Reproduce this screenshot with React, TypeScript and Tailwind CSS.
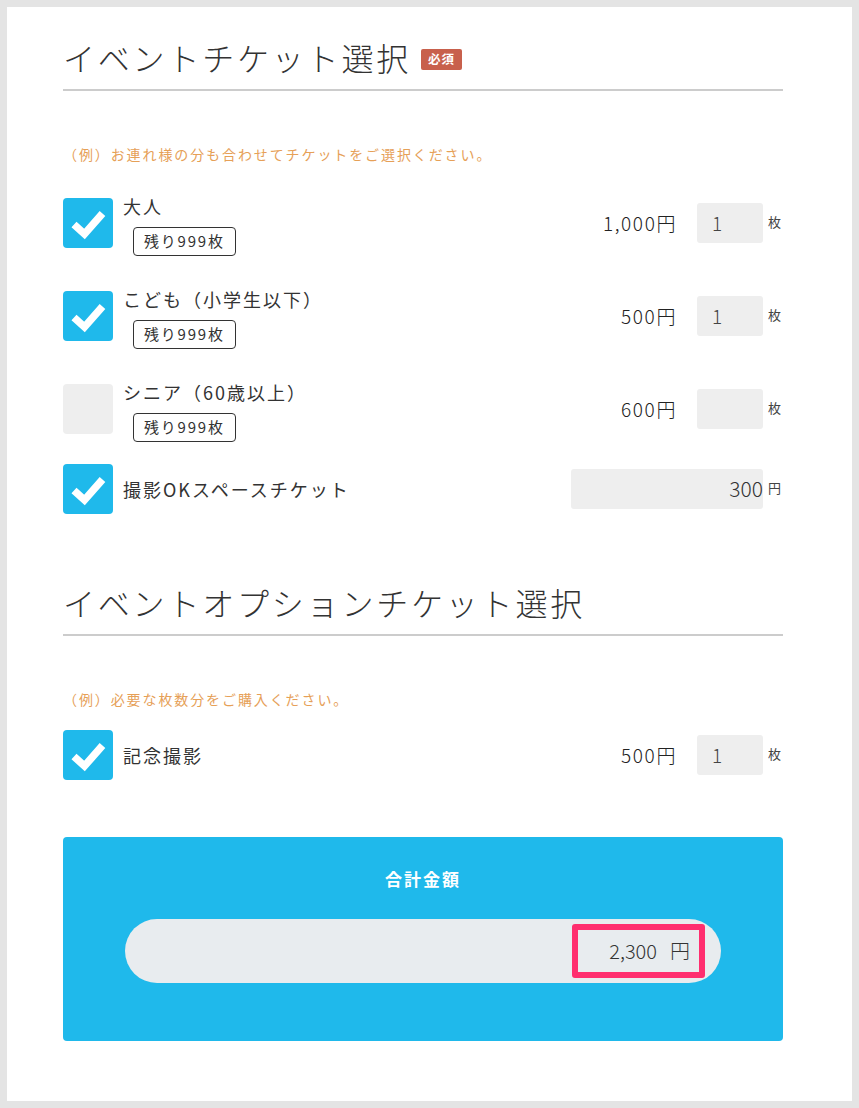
import React from "react";

const FONT = { fontFamily: '"Noto Sans CJK JP", "Noto Sans", sans-serif' };

function Check({ checked }: { checked: boolean }) {
  if (!checked) {
    return <div className="w-[50px] h-[50px] shrink-0 rounded-[4px] bg-[#eeeeee]" />;
  }
  return (
    <div className="w-[50px] h-[50px] shrink-0 rounded-[4px] bg-[#1fb9eb] flex items-center justify-center">
      <svg width="50" height="50" viewBox="0 0 50 50">
        <polyline
          points="11,26.5 21.5,36 39.5,15.5"
          fill="none"
          stroke="#ffffff"
          strokeWidth="7.5"
          strokeLinecap="butt"
          strokeLinejoin="miter"
        />
      </svg>
    </div>
  );
}

function Heading({ text, required }: { text: string; required?: boolean }) {
  return (
    <div className="border-b-2 border-[#cccccc] pb-[12px]">
      <div className="flex items-center h-[40px]">
        <h2 className="text-[32px] leading-[40px] font-light tracking-[2.8px] text-[#333333]">{text}</h2>
        {required && (
          <span className="ml-[10px] mt-[5px] h-[21px] px-[7px] flex items-center rounded-[2px] bg-[#c8604c] text-white text-[12.5px] font-bold tracking-[1px]">
            必須
          </span>
        )}
      </div>
    </div>
  );
}

function Note({ text }: { text: string }) {
  return <p className="text-[14px] leading-[20px] tracking-[1.9px] text-[#e6a057]">{text}</p>;
}

function QtyRow({
  label,
  price,
  qty,
  checked,
  badge,
}: {
  label: string;
  price: string;
  qty: string;
  checked: boolean;
  badge?: boolean;
}) {
  return (
    <div className="flex items-start">
      <Check checked={checked} />
      <div className="ml-[10px] flex-1 flex flex-col">
        {badge ? (
          <>
            <div className="-mt-[4px] text-[18px] leading-[24px] tracking-[2px] text-[#333333]">{label}</div>
            <div className="mt-[9px] ml-[10px] self-start h-[29px] px-[10px] flex items-center rounded-[4px] border border-[#333333] text-[15px] tracking-[1.8px] text-[#333333]">
              残り999枚
            </div>
          </>
        ) : (
          <div className="h-[50px] flex items-center text-[18px] tracking-[2px] text-[#333333]">{label}</div>
        )}
      </div>
      <div className="h-[50px] flex items-center">
        <span className="text-[19px] font-light tracking-[1.6px] text-[#222222]">{price}</span>
        <div className="ml-[20px] w-[66px] h-[40px] rounded-[3px] bg-[#eeeeee] flex items-center pl-[15px] text-[19px] font-light text-[#444444]">
          {qty}
        </div>
        <span className="w-[20px] pl-[5px] -mt-[3px] text-[13px] text-[#444444]">枚</span>
      </div>
    </div>
  );
}

export default function App() {
  return (
    <div style={FONT} className="w-[859px] h-[1108px] border-[7px] border-[#e4e4e4] bg-white">
      <div className="ml-[56px] w-[720px] pt-[30px]">
        <Heading text="イベントチケット選択" required />
        <div className="mt-[53px]">
          <Note text="（例）お連れ様の分も合わせてチケットをご選択ください。" />
        </div>
        <div className="mt-[34px] flex flex-col">
          <QtyRow label="大人" price="1,000円" qty="1" checked badge />
          <div className="mt-[35px]">
            <QtyRow label="こども（小学生以下）" price="500円" qty="1" checked badge />
          </div>
          <div className="mt-[35px]">
            <QtyRow label="シニア（60歳以上）" price="600円" qty="" checked={false} badge />
          </div>
          <div className="mt-[22px] flex items-center">
            <Check checked />
            <div className="ml-[10px] flex-1 text-[18px] tracking-[2px] text-[#333333]">撮影OKスペースチケット</div>
            <div className="w-[192px] h-[40px] rounded-[3px] bg-[#eeeeee] flex items-center justify-end text-[21px] font-light text-[#333333]">
              300
            </div>
            <span className="w-[20px] pl-[5px] -mt-[2px] text-[13px] text-[#444444]">円</span>
          </div>
        </div>

        <div className="mt-[68px]">
          <Heading text="イベントオプションチケット選択" />
        </div>
        <div className="mt-[53px]">
          <Note text="（例）必要な枚数分をご購入ください。" />
        </div>
        <div className="mt-[21px]">
          <QtyRow label="記念撮影" price="500円" qty="1" checked />
        </div>

        <div className="mt-[57px] h-[204px] rounded-[4px] bg-[#1fb9eb] pt-[30px] flex flex-col items-center">
          <div className="h-[24px] leading-[24px] text-[17px] font-bold tracking-[2px] text-white">合計金額</div>
          <div className="mt-[28px] w-[596px] h-[64px] rounded-full bg-[#e8ecef] flex items-center justify-end pr-[16px]">
            <div className="w-[133px] h-[54px] -mt-[1px] border-[6px] border-[#ff2e6f] rounded-[3px] flex items-center justify-end pr-[9px] text-[20px] font-light text-[#333333]">
              <span>2,300</span>
              <span className="ml-[13px]">円</span>
            </div>
          </div>
        </div>
      </div>
    </div>
  );
}
